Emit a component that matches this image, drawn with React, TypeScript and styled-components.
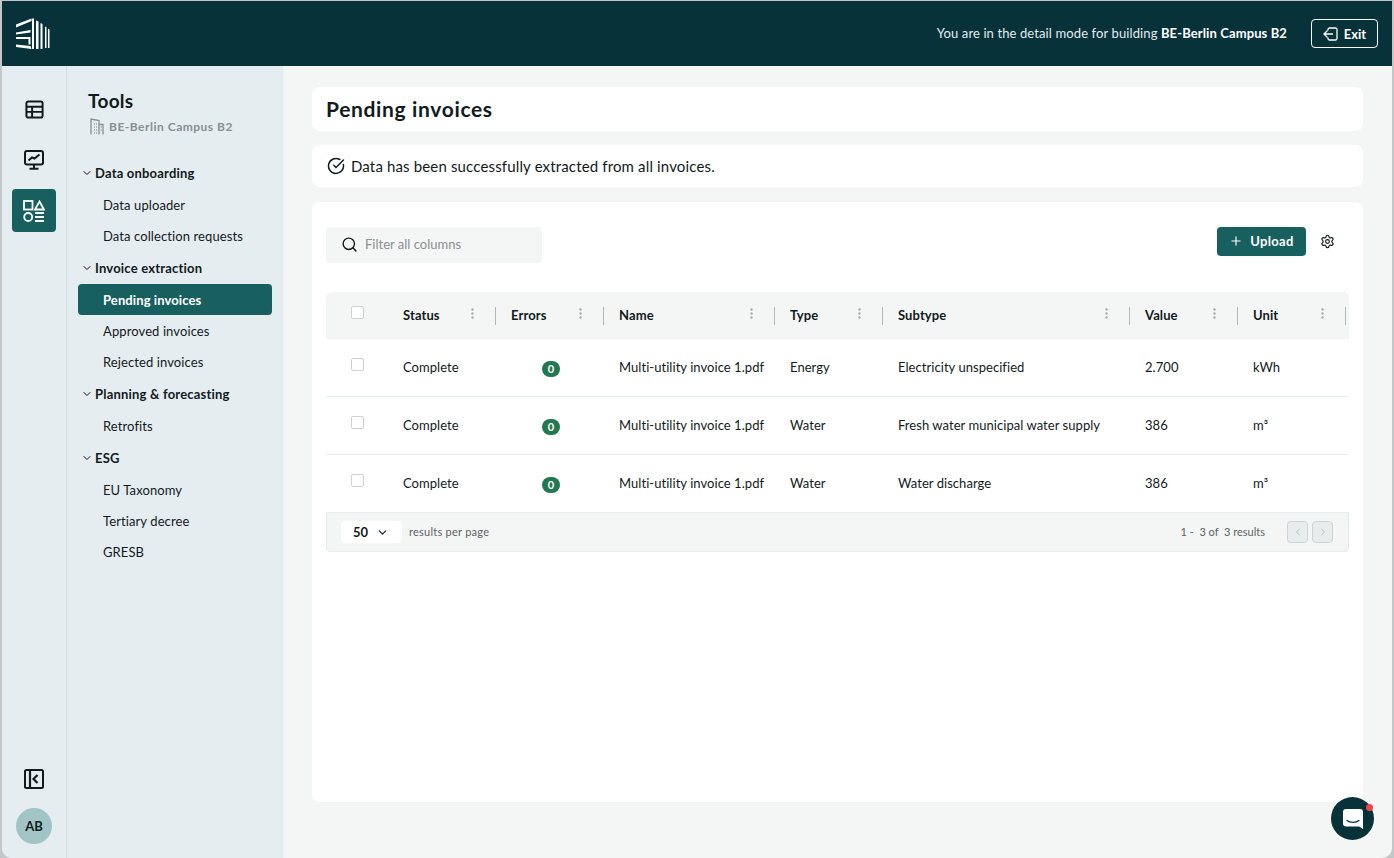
import React from 'react';
import styled, { createGlobalStyle } from 'styled-components';
import { ChevronDown, ChevronLeft, ChevronRight, CircleCheckBig, Plus, Search, Settings } from 'lucide-react';

const colors = {
  dark: '#07323a',
  teal: '#17605f',
  panel: '#e6edf0',
  page: '#f4f6f6',
  line: '#e4ecee',
  text: '#111a1c',
  muted: '#8a8f90',
};

const GlobalStyle = createGlobalStyle`
  html, body {
    margin: 0;
    padding: 0;
    height: 100%;
    background: #c4c7c8;
    overflow: hidden;
    font-family: "Lato", "Noto Sans", sans-serif;
    color: ${colors.text};
  }
  * { box-sizing: border-box; }
`;

const Frame = styled.div`
  margin: 1px 2px 0;
  height: 857px;
  display: flex;
  flex-direction: column;
  border-radius: 0 0 10px 10px;
  overflow: hidden;
  background: ${colors.page};
`;

const TopBar = styled.header`
  height: 65px;
  flex: none;
  display: flex;
  align-items: center;
  justify-content: space-between;
  padding: 0 14px 0 14px;
  background: ${colors.dark};
  color: #fff;
`;

const Logo = styled.svg`
  width: 34px;
  height: 31px;
  fill: #fff;
`;

const ModeInfo = styled.div`
  display: flex;
  align-items: center;
  gap: 24px;
  font-size: 13px;
  letter-spacing: 0.11px;
  color: #e3ecec;
`;

const ModeText = styled.span`
  padding-bottom: 2px;
`;

const ModeBuilding = styled.b`
  font-weight: 700;
  color: #fff;
`;

const ExitButton = styled.button`
  width: 67px;
  height: 29px;
  display: flex;
  align-items: center;
  justify-content: center;
  gap: 6px;
  padding: 0;
  background: transparent;
  border: 1px solid #fff;
  border-radius: 4px;
  color: #fff;
  font: 700 13px "Lato", sans-serif;
`;

const Body = styled.div`
  flex: 1;
  display: flex;
  min-height: 0;
`;

const Rail = styled.nav`
  width: 65px;
  flex: none;
  display: flex;
  flex-direction: column;
  align-items: center;
  padding: 22px 0 14px;
  background: ${colors.panel};
  border-right: 1px solid #cfe0e0;
`;

const RailButton = styled.div<{ $active?: boolean }>`
  width: 44px;
  height: 43px;
  margin-top: ${(props) => (props.$active ? '1px' : '0')};
  margin-bottom: 7px;
  display: flex;
  align-items: center;
  justify-content: center;
  border-radius: 4px;
  background: ${(props) => (props.$active ? colors.teal : 'transparent')};
  color: ${(props) => (props.$active ? '#fff' : colors.text)};
`;

const RailSpacer = styled.div`
  flex: 1;
`;

const Avatar = styled.div`
  width: 36px;
  height: 36px;
  margin-top: 1px;
  display: flex;
  align-items: center;
  justify-content: center;
  border-radius: 50%;
  background: #a1c4c4;
  font-size: 13px;
  font-weight: 700;
`;

const ToolsPanel = styled.aside`
  width: 216px;
  flex: none;
  padding: 23px 11px 0;
  background: ${colors.panel};
`;

const ToolsTitle = styled.h2`
  margin: 0 0 0 10px;
  font-size: 19px;
  line-height: 24px;
  font-weight: 700;
  letter-spacing: 0.3px;
`;

const ToolsBuilding = styled.div`
  display: flex;
  align-items: center;
  gap: 5px;
  height: 18px;
  margin: 4px 0 22px 12px;
  font-size: 12px;
  font-weight: 700;
  letter-spacing: 0.5px;
  color: ${colors.muted};
`;

const ToolSection = styled.div`
  margin-top: 1px;
`;

const SectionHeading = styled.div`
  height: 32px;
  display: flex;
  align-items: center;
  gap: 2px;
  padding-left: 3px;
  font-size: 13px;
  font-weight: 700;
  letter-spacing: 0.2px;
`;

const ToolItem = styled.div<{ $active?: boolean }>`
  height: 31px;
  display: flex;
  align-items: center;
  padding-left: 25px;
  border-radius: 4px;
  font-size: 13px;
  letter-spacing: 0.1px;
  font-weight: ${(props) => (props.$active ? 700 : 400)};
  background: ${(props) => (props.$active ? colors.teal : 'transparent')};
  color: ${(props) => (props.$active ? '#fff' : colors.text)};
`;

const Main = styled.main`
  flex: 1;
  min-width: 0;
  display: flex;
  flex-direction: column;
  padding: 21px 29px 56px;
`;

const TitleCard = styled.div`
  height: 44px;
  display: flex;
  align-items: center;
  padding: 0 0 2px 14px;
  background: #fff;
  border-radius: 8px;
`;

const PageTitle = styled.h1`
  margin: 0;
  font-size: 21px;
  font-weight: 700;
  letter-spacing: 0.65px;
`;

const NoticeCard = styled.div`
  height: 42px;
  margin-top: 14px;
  display: flex;
  align-items: center;
  gap: 6px;
  padding-left: 15px;
  background: #fff;
  border-radius: 8px;
  font-size: 15px;
  letter-spacing: 0.15px;
`;

const TableCard = styled.section`
  flex: 1;
  margin-top: 15px;
  padding: 25px 14px 0;
  background: #fff;
  border-radius: 8px;
`;

const Toolbar = styled.div`
  height: 36px;
  margin-bottom: 29px;
  display: flex;
  align-items: flex-start;
  justify-content: space-between;
`;

const SearchBox = styled.div`
  width: 216px;
  height: 36px;
  display: flex;
  align-items: center;
  gap: 7px;
  padding: 0 0 2px 15px;
  background: ${colors.page};
  border-radius: 4px;
  font-size: 13px;
  color: ${colors.muted};
`;

const ToolbarActions = styled.div`
  display: flex;
  align-items: center;
  gap: 14px;
  padding-right: 14px;
`;

const UploadButton = styled.button`
  width: 89px;
  height: 29px;
  display: flex;
  align-items: center;
  justify-content: center;
  gap: 7px;
  padding: 0 0 2px;
  border: 0;
  border-radius: 4px;
  background: ${colors.teal};
  color: #fff;
  font: 700 13px "Lato", sans-serif;
  letter-spacing: 0.3px;
`;

const columns = '62px 108px 108px 171px 108px 247px 108px 108px 3px';

const HeadRow = styled.div`
  height: 47px;
  display: grid;
  grid-template-columns: ${columns};
  align-items: center;
  background: ${colors.page};
  border-radius: 6px 6px 0 0;
`;

const HeadCell = styled.div`
  height: 100%;
  display: flex;
  align-items: center;
  justify-content: space-between;
  padding-left: 15px;
  font-size: 13px;
  font-weight: 700;
  letter-spacing: 0.1px;
`;

const HeadLabel = styled.span`
  padding-bottom: 2px;
`;

const HeadTools = styled.div`
  display: flex;
  align-items: center;
  gap: 21px;
  padding-bottom: 2px;
`;

const Kebab = styled.svg`
  width: 3px;
  height: 11px;
  fill: #a9adae;
  margin-bottom: 3px;
`;

const Divider = styled.span`
  width: 1px;
  height: 18px;
  background: #b4b8b9;
  margin-top: 2px;
`;

const Row = styled.div<{ $last?: boolean }>`
  height: ${(props) => (props.$last ? '57px' : '58px')};
  display: grid;
  grid-template-columns: ${columns};
  align-items: center;
  border-bottom: ${(props) => (props.$last ? '0' : `1px solid ${colors.line}`)};
`;

const Cell = styled.div`
  padding: 0 0 1px 15px;
  font-size: 13px;
  letter-spacing: 0.05px;
  white-space: nowrap;
`;

const CheckCell = styled.div`
  padding-left: 25px;
  display: flex;
`;

const Checkbox = styled.span`
  width: 13px;
  height: 13px;
  margin-bottom: 6px;
  border: 1px solid #cdd1d2;
  border-radius: 2px;
  background: #fff;
`;

const BadgeCell = styled.div`
  display: flex;
  justify-content: center;
  padding: 2px 0 0 2px;
`;

const Badge = styled.span`
  width: 18px;
  height: 16px;
  display: flex;
  align-items: center;
  justify-content: center;
  border-radius: 8px;
  background: #23784f;
  color: #fff;
  font-size: 11px;
  font-weight: 700;
`;

const Pager = styled.div`
  height: 40px;
  display: flex;
  align-items: center;
  justify-content: space-between;
  padding: 0 15px 0 14px;
  background: ${colors.page};
  border: 1px solid ${colors.line};
  border-radius: 0 0 4px 4px;
`;

const PagerSide = styled.div`
  display: flex;
  align-items: center;
`;

const PageSize = styled.div`
  width: 61px;
  height: 22px;
  margin-right: 7px;
  display: flex;
  align-items: center;
  justify-content: space-between;
  padding: 0 13px 0 12px;
  background: #fff;
  border-radius: 4px;
  font-size: 13px;
  font-weight: 700;
`;

const PagerText = styled.span<{ $tight?: boolean }>`
  padding-bottom: 2px;
  font-size: 11px;
  letter-spacing: ${(props) => (props.$tight ? '0' : '0.25px')};
  color: #5c6264;
  white-space: pre;
`;

const PagerButton = styled.span<{ $gap?: number }>`
  width: 21px;
  height: 22px;
  margin-left: ${(props) => props.$gap ?? 4}px;
  display: flex;
  align-items: center;
  justify-content: center;
  background: #e9eced;
  border: 1px solid #cfd3d4;
  border-radius: 4px;
  color: #b3b8b9;
`;

const ChatBubble = styled.div`
  position: fixed;
  left: 1331px;
  top: 797px;
  width: 43px;
  height: 43px;
  display: flex;
  align-items: center;
  justify-content: center;
  border-radius: 50%;
  background: ${colors.dark};
`;

const ChatDot = styled.span`
  position: absolute;
  top: 7px;
  right: 1px;
  width: 7px;
  height: 7px;
  border-radius: 50%;
  background: #f2444a;
`;

const sections = [
  { title: 'Data onboarding', items: ['Data uploader', 'Data collection requests'] },
  { title: 'Invoice extraction', items: ['Pending invoices', 'Approved invoices', 'Rejected invoices'] },
  { title: 'Planning & forecasting', items: ['Retrofits'] },
  { title: 'ESG', items: ['EU Taxonomy', 'Tertiary decree', 'GRESB'] },
];

const headers = ['Status', 'Errors', 'Name', 'Type', 'Subtype', 'Value', 'Unit'];

const rows = [
  { type: 'Energy', subtype: 'Electricity unspecified', value: '2.700', unit: 'kWh' },
  { type: 'Water', subtype: 'Fresh water municipal water supply', value: '386', unit: 'm³' },
  { type: 'Water', subtype: 'Water discharge', value: '386', unit: 'm³' },
];

const LogoMark = () => (
  <Logo viewBox="0 0 34 31">
    <polygon points="0,6.500 15.500,0.500 15.500,3 0,9.500" />
    <polygon points="0,14.500 14.500,12 14.500,14.500 0,16.500" />
    <polygon points="0,19 14.500,19 14.500,26.500 12.500,26.500 12.500,21 0,21" />
    <polygon points="0,26.500 14.500,28 15.500,31 0,29" />
    <polygon points="16,0.500 18,0.500 18,31 16,31" />
    <polygon points="20,2.500 22.500,3.500 22.500,31 20,31" />
    <polygon points="24.500,5 26.500,6 26.500,31 24.500,31" />
    <polygon points="29,8.500 30.500,9.500 30.500,30 29,30" />
    <polygon points="32,10.500 33.500,11.500 33.500,30 32,30" />
  </Logo>
);

const TableIcon = () => (
  <svg width="19" height="19" viewBox="0 0 20 20" fill="none" stroke="currentColor" strokeWidth="2.100">
    <rect x="1.500" y="1.500" width="17" height="17" rx="2" />
    <path d="M1.500 7h17M1.500 12.500h17M7.500 7v11.500" />
  </svg>
);

const MonitorIcon = () => (
  <svg width="20" height="20" viewBox="0 0 20 20" fill="none" stroke="currentColor" strokeWidth="2">
    <rect x="1" y="1" width="18" height="13.500" rx="2" />
    <path d="M4.500 10.500 8 7.500l2.500 1L15.500 4.500M10 14.500v4M5.500 18.800h9" />
  </svg>
);

const ToolsIcon = () => (
  <svg width="22" height="22" viewBox="0 0 22 22" fill="none" stroke="currentColor" strokeWidth="1.800">
    <rect x="1" y="1" width="8.500" height="8.500" />
    <path d="M16.500 1.500 21 9.500h-9z" />
    <circle cx="5.200" cy="17" r="4" />
    <path d="M12 13h9M12 17h9M12 21h9" />
  </svg>
);

const CollapseIcon = () => (
  <svg width="20" height="20" viewBox="0 0 20 20" fill="none" stroke="currentColor" strokeWidth="2">
    <rect x="1" y="1" width="18" height="18" rx="1.500" />
    <path d="M6 1v18M13.500 6 9.500 10l4 4" strokeWidth="2.200" />
  </svg>
);

const BuildingIcon = () => (
  <svg width="14" height="17" viewBox="0 0 14 17" fill="none" stroke="#8a8f90" strokeWidth="1.300">
    <path d="M1 16.500V1l8 1.500v14M9 6.500h4v10" />
    <path d="M4 6h.8M6.200 6H7M4 9h.8M6.200 9H7M4 12h.8M6.200 12H7M4 15h.8M6.200 15H7M10.800 9h.8M10.800 12h.8" />
  </svg>
);

const ExitIcon = () => (
  <svg width="15" height="14" viewBox="0 0 15 14" fill="none" stroke="currentColor" strokeWidth="1.300">
    <path d="M5 3.500V2.500A1.500 1.500 0 0 1 6.500 1h6A1.500 1.500 0 0 1 14 2.500v9a1.500 1.500 0 0 1-1.500 1.500h-6A1.500 1.500 0 0 1 5 11.500V10.500" />
    <path d="M10 7H1M4.500 3.500 1 7l3.500 3.500" />
  </svg>
);

const ChatIcon = () => (
  <svg width="20" height="20" viewBox="0 0 20 20">
    <path d="M3 0h14a3 3 0 0 1 3 3v17l-4-2.500H3a3 3 0 0 1-3-3V3a3 3 0 0 1 3-3z" fill="#fff" />
    <path d="M4 11.500c3 2.500 9 2.500 12 0" fill="none" stroke={colors.dark} strokeWidth="1.200" strokeLinecap="round" />
  </svg>
);

function App() {
  return (
    <>
      <GlobalStyle />
      <Frame>
        <TopBar>
          <LogoMark />
          <ModeInfo>
            <ModeText>
              You are in the detail mode for building <ModeBuilding>BE-Berlin Campus B2</ModeBuilding>
            </ModeText>
            <ExitButton>
              <ExitIcon />
              Exit
            </ExitButton>
          </ModeInfo>
        </TopBar>
        <Body>
          <Rail>
            <RailButton><TableIcon /></RailButton>
            <RailButton><MonitorIcon /></RailButton>
            <RailButton $active><ToolsIcon /></RailButton>
            <RailSpacer />
            <RailButton><CollapseIcon /></RailButton>
            <Avatar>AB</Avatar>
          </Rail>
          <ToolsPanel>
            <ToolsTitle>Tools</ToolsTitle>
            <ToolsBuilding>
              <BuildingIcon />
              BE-Berlin Campus B2
            </ToolsBuilding>
            {sections.map((section) => (
              <ToolSection key={section.title}>
                <SectionHeading>
                  <ChevronDown size={12} strokeWidth={2} />
                  {section.title}
                </SectionHeading>
                {section.items.map((item) => (
                  <ToolItem key={item} $active={item === 'Pending invoices'}>{item}</ToolItem>
                ))}
              </ToolSection>
            ))}
          </ToolsPanel>
          <Main>
            <TitleCard>
              <PageTitle>Pending invoices</PageTitle>
            </TitleCard>
            <NoticeCard>
              <CircleCheckBig size={18} strokeWidth={2} />
              Data has been successfully extracted from all invoices.
            </NoticeCard>
            <TableCard>
              <Toolbar>
                <SearchBox>
                  <Search size={17} strokeWidth={2} color={colors.text} />
                  Filter all columns
                </SearchBox>
                <ToolbarActions>
                  <UploadButton>
                    <Plus size={14} strokeWidth={2} />
                    Upload
                  </UploadButton>
                  <Settings size={15} strokeWidth={1.800} />
                </ToolbarActions>
              </Toolbar>
              <HeadRow>
                <CheckCell><Checkbox /></CheckCell>
                {headers.map((header) => (
                  <HeadCell key={header}>
                    <HeadLabel>{header}</HeadLabel>
                    <HeadTools>
                      <Kebab viewBox="0 0 3 11">
                        <circle cx="1.500" cy="1.500" r="1.200" />
                        <circle cx="1.500" cy="5.500" r="1.200" />
                        <circle cx="1.500" cy="9.500" r="1.200" />
                      </Kebab>
                      <Divider />
                    </HeadTools>
                  </HeadCell>
                ))}
              </HeadRow>
              {rows.map((row, index) => (
                <Row key={row.subtype} $last={index === rows.length - 1}>
                  <CheckCell><Checkbox /></CheckCell>
                  <Cell>Complete</Cell>
                  <BadgeCell><Badge>0</Badge></BadgeCell>
                  <Cell>Multi-utility invoice 1.pdf</Cell>
                  <Cell>{row.type}</Cell>
                  <Cell>{row.subtype}</Cell>
                  <Cell>{row.value}</Cell>
                  <Cell>{row.unit}</Cell>
                </Row>
              ))}
              <Pager>
                <PagerSide>
                  <PageSize>
                    50
                    <ChevronDown size={13} strokeWidth={2} />
                  </PageSize>
                  <PagerText>results per page</PagerText>
                </PagerSide>
                <PagerSide>
                  <PagerText $tight>{'1 -  3 of  3 results'}</PagerText>
                  <PagerButton $gap={22}><ChevronLeft size={12} /></PagerButton>
                  <PagerButton><ChevronRight size={12} /></PagerButton>
                </PagerSide>
              </Pager>
            </TableCard>
          </Main>
        </Body>
      </Frame>
      <ChatBubble>
        <ChatIcon />
        <ChatDot />
      </ChatBubble>
    </>
  );
}

export default App;
